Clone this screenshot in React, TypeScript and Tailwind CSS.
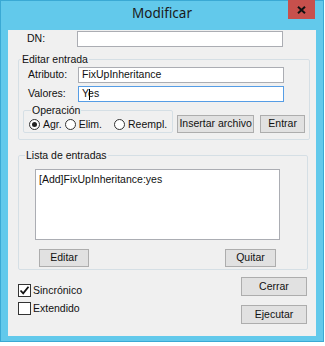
import React from "react";

const font = { fontFamily: '"Liberation Sans", Arial, sans-serif' };

function Button({ label, className }: { label: string; className: string }) {
  return (
    <button
      className={`flex items-center justify-center border border-[#adadad] bg-[#e1e1e1] text-[10.5px] text-[#111] ${className}`}
    >
      {label}
    </button>
  );
}

function Radio({ checked, label }: { checked?: boolean; label: string }) {
  return (
    <label className="flex items-center gap-[3px]">
      <span className="flex h-[11px] w-[11px] items-center justify-center rounded-full border border-[#333] bg-white">
        {checked && <span className="h-[5px] w-[5px] rounded-full bg-[#222]" />}
      </span>
      <span>{label}</span>
    </label>
  );
}

function Check({ checked, label }: { checked?: boolean; label: string }) {
  return (
    <label className="flex items-center gap-[2px] leading-[13px]">
      <span className="flex h-[13px] w-[13px] items-center justify-center border border-[#333] bg-white">
        {checked && (
          <svg width="11" height="11" viewBox="0 0 11 11">
            <path d="M1.5 5.5 L4.2 8.3 L9.5 1.8" fill="none" stroke="#111" strokeWidth="1.8" />
          </svg>
        )}
      </span>
      <span>{label}</span>
    </label>
  );
}

export default function App() {
  return (
    <div className="h-[346px] w-[325px] bg-white" style={font}>
      <div className="flex h-[342px] w-[324px] flex-col bg-[#62c9eb] px-[8px] pb-[6px] shadow-[inset_0_0_0_1px_#3aa9d4]">
        {/* Title bar */}
        <div className="relative flex h-[30px] shrink-0 items-center justify-center">
          <span
            className="mt-[-4px] text-[13.5px] text-[#1a1a1a]"
            style={{ fontFamily: '"Noto Sans", "Open Sans", sans-serif' }}
          >
            Modificar
          </span>
          <div className="absolute right-[1px] top-0 flex h-[19px] w-[27px] items-center justify-center bg-[#c7504c]">
            <svg width="9" height="8" viewBox="0 0 9 8">
              <path d="M1 0.8 L8 7.2 M8 0.8 L1 7.2" stroke="#111" strokeWidth="2" />
            </svg>
          </div>
        </div>

        {/* Client area */}
        <div className="flex flex-1 flex-col bg-[#f0f0f0] px-[10px] pt-[1px] text-[10.5px] text-[#111]">
          <div className="flex h-[16px] items-center">
            <span className="w-[59px] pl-[9px]">DN:</span>
            <div className="h-[16px] w-[206px] border border-[#abadb3] bg-white" />
          </div>

          <fieldset className="mt-[6px] h-[87px] w-[290px] rounded-[2px] border border-[#d5dfe5] px-[4px]">
            <legend className="ml-[-2px] px-[1px] leading-[13px]">Editar entrada</legend>
            <div className="mt-[1px] flex h-[16px] items-center">
              <span className="w-[55px] pl-[5px]">Atributo:</span>
              <div className="flex h-[16px] w-[206px] items-center border border-[#abadb3] bg-white pl-[3px]">
                FixUpInheritance
              </div>
            </div>
            <div className="mt-[3px] flex h-[16px] items-center">
              <span className="w-[55px] pl-[5px]">Valores:</span>
              <div className="relative flex h-[16px] w-[206px] items-center border border-[#569de5] bg-white pl-[3px]">
                Yes
                <span className="absolute left-[10px] top-[2px] h-[11px] w-[1px] bg-black" />
              </div>
            </div>
            <div className="mt-[2px] flex items-end">
              <fieldset className="h-[29px] w-[147px] rounded-[2px] border border-[#d5dfe5] px-[5px]">
                <legend className="ml-[2px] px-[1px] leading-[12px]">Operación</legend>
                <div className="flex items-center pt-[1px]">
                  <Radio checked label="Agr." />
                  <span className="ml-[3px]">
                    <Radio label="Elim." />
                  </span>
                  <span className="ml-[12px]">
                    <Radio label="Reempl." />
                  </span>
                </div>
              </fieldset>
              <Button label="Insertar archivo" className="ml-[4px] h-[18px] w-[77px]" />
              <Button label="Entrar" className="ml-[6px] h-[18px] w-[45px]" />
            </div>
          </fieldset>

          <fieldset className="mt-[9px] h-[121px] w-[290px] rounded-[2px] border border-[#d5dfe5] px-[16px]">
            <legend className="ml-[-10px] px-[1px] leading-[13px]">Lista de entradas</legend>
            <div className="mt-[7px] h-[71px] w-[245px] border border-[#abadb3] bg-white px-[3px] pt-[2px]">
              [Add]FixUpInheritance:yes
            </div>
            <div className="mt-[9px] flex justify-between pl-[4px] pr-[15px]">
              <Button label="Editar" className="h-[18px] w-[50px]" />
              <Button label="Quitar" className="h-[18px] w-[51px]" />
            </div>
          </fieldset>

          <div className="mt-[7px] flex justify-between">
            <div className="flex flex-col gap-[5px] pt-[7px]">
              <Check checked label="Sincrónico" />
              <Check label="Extendido" />
            </div>
            <div className="mr-[-1px] flex flex-col gap-[9px]">
              <Button label="Cerrar" className="h-[19px] w-[66px]" />
              <Button label="Ejecutar" className="h-[19px] w-[66px]" />
            </div>
          </div>
        </div>
      </div>
    </div>
  );
}
